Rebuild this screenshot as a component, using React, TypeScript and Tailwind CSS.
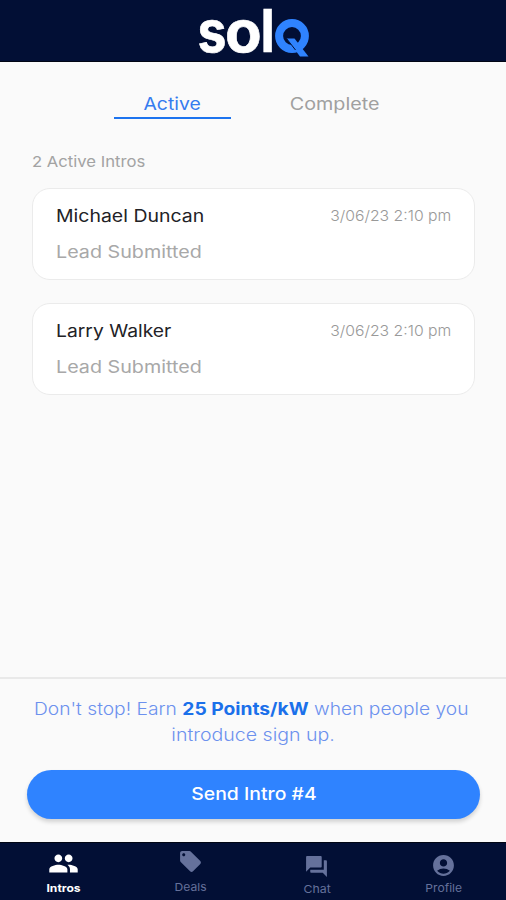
import React from "react";
import { MdPeople, MdLocalOffer, MdQuestionAnswer, MdAccountCircle } from "react-icons/md";

function Logo() {
  return (
    <svg width="114" height="62" viewBox="0 0 114 62" className="block overflow-visible" aria-label="solQ">
      <g fill="#fff" stroke="#fff" strokeWidth="0.600" fontFamily="Inter, sans-serif" fontWeight="700">
        <text fontSize="57" transform="translate(1.500 52) scale(.91 1)">s</text>
        <text fontSize="57" transform="translate(29 52) scale(1.050 1)">o</text>
        <text fontSize="59" transform="translate(64.500 52) scale(.9 1)">l</text>
      </g>
      <circle cx="96" cy="36" r="12.900" fill="none" stroke="#2f83ff" strokeWidth="8" />
      <path d="M90.500 38.500h8l14 18h-8.500z" fill="#2f83ff" />
      <path d="M90.500 38.500l9 11.500" stroke="#020f35" strokeWidth="1" />
    </svg>
  );
}

function IntroCard({ name, stretch }: { name: string; stretch: string }) {
  return (
    <div className="h-[92px] w-[443px] rounded-[18px] border-[1.5px] border-[#ebebeb] bg-white px-[23px] pt-[16px]">
      <div className="flex h-6 items-center justify-between">
        <span className={`origin-left text-[17px] text-[#222226] ${stretch}`}>{name}</span>
        <span className="-mt-0.5 origin-right scale-x-[1.05] text-[15px] font-light text-[#999]">3/06/23 2:10 pm</span>
      </div>
      <div className="mt-3 flex h-6 origin-left scale-x-[1.16] items-center text-[17px] text-[#a8a8a8]">
        <span>Lead Submitted</span>
      </div>
    </div>
  );
}

export default function App() {
  return (
    <div className="flex h-[900px] w-[506px] flex-col overflow-hidden bg-[#fafafa] font-['Inter',sans-serif] whitespace-nowrap">
      <header className="flex h-[62px] shrink-0 justify-center border-b border-[#010614] bg-[#020f35]">
        <Logo />
      </header>

      <main className="flex flex-1 flex-col px-8 pt-[27px]">
        <nav className="flex justify-center gap-[45px] text-[17px]">
          <div className="flex h-[30px] w-[117px] justify-center border-b-2 border-[#1d74ef] pt-[3px] leading-6 text-[#357cef]">
            <span className="scale-x-[1.14]">Active</span>
          </div>
          <div className="flex h-[30px] w-[117px] justify-center pt-[3px] pl-px leading-6 text-[#a0a0a0]">
            <span className="scale-x-[1.16]">Complete</span>
          </div>
        </nav>
        <div className="mt-[33px] h-5 origin-left scale-x-[1.11] text-[15px] leading-5 text-[#a3a3a3]">
          2 Active Intros
        </div>
        <div className="mt-[16px] flex flex-col gap-[23px]">
          <IntroCard name="Michael Duncan" stretch="scale-x-[1.145]" />
          <IntroCard name="Larry Walker" stretch="scale-x-[1.135]" />
        </div>
      </main>

      <section className="h-[165px] shrink-0 border-t-2 border-[#e9e9e9] px-[27px] pt-[17px]">
        <p className="flex flex-col items-center text-[17px] leading-[26px] font-light text-[#6c91ee]">
          <span className="-ml-[3px] scale-x-[1.13]">
            Don't stop! Earn <b className="font-bold text-[#1b70ea]">25 Points/kW</b> when people you
          </span>
          <span className="scale-x-[1.15]">introduce sign up.</span>
        </p>
        <button className="mt-[22px] flex h-[49px] w-[453px] items-center justify-center rounded-full bg-[#2f83ff] pt-px text-[17px] font-medium text-white shadow-[0_3px_4px_rgba(0,0,0,0.16)]">
          <span className="scale-x-[1.14]">Send Intro #4</span>
        </button>
      </section>

      <footer className="grid h-[58px] shrink-0 grid-cols-4 border-t border-[#010614] bg-[#020f35] text-[11px] leading-[14px] text-[#65719b]">
        <div className="flex flex-col items-center pt-[5px] font-bold text-white">
          <MdPeople size={31} />
          <span className="mt-[2px] ml-px scale-x-[1.1]">Intros</span>
        </div>
        <div className="flex flex-col items-center pt-[6px]">
          <MdLocalOffer size={25} className="ml-px" />
          <span className="mt-[6px] ml-px scale-x-[1.1]">Deals</span>
        </div>
        <div className="flex flex-col items-center pt-[11px]">
          <MdQuestionAnswer size={25} className="ml-px" />
          <span className="mt-[3px] ml-px scale-x-[1.12]">Chat</span>
        </div>
        <div className="flex flex-col items-center pt-[10px]">
          <MdAccountCircle size={25} className="ml-px" />
          <span className="mt-[3px] ml-px scale-x-[1.1]">Profile</span>
        </div>
      </footer>
    </div>
  );
}
